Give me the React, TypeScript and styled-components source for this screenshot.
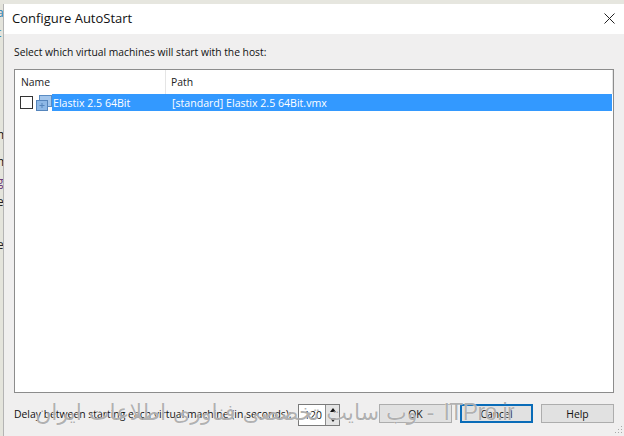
import React from "react";
import styled, { createGlobalStyle } from "styled-components";

const Global = createGlobalStyle`
  html, body { margin: 0; padding: 0; background: #e6e6df; }
  * { box-sizing: border-box; }
  #root { width: 624px; height: 436px; overflow: hidden; }
`;

const Page = styled.div`
  position: relative;
  width: 624px;
  height: 436px;
  display: flex;
  padding-top: 4px;
  overflow: hidden;
  font-family: "Open Sans", "Noto Sans", sans-serif;
  font-size: 10.4px;
  color: #111;
`;

const Behind = styled.div`
  width: 3px;
  flex: none;
  display: flex;
  flex-direction: column;
  overflow: hidden;
  background: #e4e4dc;
  font-size: 12px;
  line-height: 14px;
`;

const BehindLetter = styled.span<{ $top: number; $color?: string }>`
  display: block;
  height: 14px;
  margin-top: ${(p) => p.$top}px;
  margin-left: -3px;
  color: ${(p) => p.$color || "#222"};
`;

const Window = styled.div`
  flex: 1;
  display: flex;
  flex-direction: column;
  background: #f0efef;
  border-left: 1px solid #b4b4b4;
`;

const TitleBar = styled.div`
  height: 30px;
  flex: none;
  display: flex;
  align-items: center;
  justify-content: space-between;
  padding: 0 9px 2px 8px;
  background: #fff;
  font-size: 13px;
`;

const Body = styled.div`
  flex: 1;
  display: flex;
  flex-direction: column;
  padding: 11px 9px 11px 10px;
`;

const Prompt = styled.div`
  height: 14px;
  line-height: 14px;
  margin-bottom: 10px;
  font-size: 10.3px;
`;

const List = styled.div`
  height: 324px;
  flex: none;
  margin-right: 1px;
  background: #fff;
  border: 1px solid #8c8c8c;
`;

const HeaderRow = styled.div`
  display: flex;
  height: 24px;
`;

const HeaderCell = styled.div<{ $width: number; $pad: number }>`
  width: ${(p) => p.$width}px;
  flex: none;
  padding-left: ${(p) => p.$pad}px;
  line-height: 24px;
  color: #222;
  border-right: 1px solid #e5e5e5;
`;

const Row = styled.div`
  display: flex;
  align-items: center;
  height: 17px;
`;

const Check = styled.span`
  width: 13px;
  height: 13px;
  flex: none;
  margin-left: 5px;
  background: #fff;
  border: 1px solid #333;
`;

const VmIcon = styled.svg`
  flex: none;
  width: 16px;
  height: 16px;
  margin-left: 3px;
`;

const Selected = styled.div`
  flex: 1;
  height: 17px;
  margin-right: 1px;
  display: flex;
  align-items: center;
  background: #3399ff;
  color: #fff;
  font-size: 10.6px;
`;

const SelectedCell = styled.div<{ $width?: number }>`
  width: ${(p) => (p.$width ? `${p.$width}px` : "auto")};
  flex: none;
  padding-left: 1px;
`;

const Footer = styled.div`
  display: flex;
  align-items: flex-start;
  height: 22px;
  margin-top: 11px;
  padding-right: 1px;
`;

const DelayLabel = styled.span`
  width: 284px;
  flex: none;
  line-height: 20px;
  white-space: nowrap;
  font-size: 10.4px;
`;

const Spinner = styled.div`
  display: flex;
  width: 42px;
  height: 22px;
  flex: none;
  background: #fff;
  border: 1px solid #7a7a7a;
`;

const SpinValue = styled.span`
  flex: 1;
  line-height: 20px;
  padding-left: 5px;
  overflow: hidden;
`;

const SpinArrows = styled.div`
  width: 14px;
  display: flex;
  flex-direction: column;
  background: #e4e4e4;
  border-left: 1px solid #8c8c8c;
`;

const SpinArrow = styled.span<{ $down?: boolean }>`
  flex: 1;
  display: flex;
  align-items: center;
  justify-content: center;
  &::before {
    content: "";
    border-left: 3px solid transparent;
    border-right: 3px solid transparent;
    ${(p) => (p.$down ? "border-top: 4px solid #111;" : "border-bottom: 4px solid #111;")}
  }
`;

const Buttons = styled.div`
  display: flex;
  gap: 8px;
  margin-left: auto;
`;

const Button = styled.button<{ $focused?: boolean }>`
  width: 73px;
  height: 19px;
  padding: 0;
  font: inherit;
  color: #111;
  background: #e1e1e1;
  border: ${(p) => (p.$focused ? "2px solid #0a6cb8" : "1px solid #adadad")};
`;

const Grip = styled.svg`
  position: absolute;
  right: 1px;
  bottom: 1px;
  width: 10px;
  height: 10px;
`;

/* semi transparent site watermark lying over the footer */
const Watermark = styled.div`
  position: absolute;
  left: 0;
  top: 398px;
  width: 514px;
  display: flex;
  justify-content: flex-end;
  align-items: baseline;
  gap: 9px;
  white-space: nowrap;
  color: rgba(125, 125, 125, 0.6);
  font-family: "DejaVu Sans", "Noto Sans", sans-serif;
  font-size: 22px;
  line-height: 28px;
  text-shadow: 0 0 1px #fff;
  pointer-events: none;
`;

const WatermarkLatin = styled.span`
  font-family: "Liberation Sans", sans-serif;
  font-size: 23px;
  letter-spacing: -0.6px;
`;

export default function App() {
  return (
    <Page>
      <Global />
      <Behind>
        <BehindLetter $top={2} $color="#2a7fb0">a</BehindLetter>
        <BehindLetter $top={6} $color="#2a7fb0">t</BehindLetter>
        <BehindLetter $top={88}>m</BehindLetter>
        <BehindLetter $top={13}>m</BehindLetter>
        <BehindLetter $top={6} $color="#6a3a7a">g</BehindLetter>
        <BehindLetter $top={6}>e</BehindLetter>
        <BehindLetter $top={7} $color="#6bb8d8">.</BehindLetter>
        <BehindLetter $top={8}>e</BehindLetter>
        <BehindLetter $top={6} $color="#6bb8d8">.</BehindLetter>
      </Behind>
      <Window>
        <TitleBar>
          <span>Configure AutoStart</span>
          <svg width="11" height="11" viewBox="0 0 11 11">
            <path d="M0.5 0.5L10.5 10.5M10.5 0.5L0.5 10.5" stroke="#222" strokeWidth="1" fill="none" />
          </svg>
        </TitleBar>
        <Body>
          <Prompt>Select which virtual machines will start with the host:</Prompt>
          <List>
            <HeaderRow>
              <HeaderCell $width={151} $pad={6}>Name</HeaderCell>
              <HeaderCell $width={447} $pad={5}>Path</HeaderCell>
            </HeaderRow>
            <Row>
              <Check />
              <VmIcon viewBox="0 0 16 16">
                <rect x="3.5" y="0.5" width="12" height="11" fill="#a3c6ec" stroke="#5b8cc2" />
                <rect x="0.5" y="5.5" width="11" height="10" fill="#8db8e6" stroke="#5585bc" />
                <path d="M6 8v5M3.5 10.5h5" stroke="#5585bc" />
              </VmIcon>
              <Selected>
                <SelectedCell $width={119}>Elastix 2.5 64Bit</SelectedCell>
                <SelectedCell>[standard] Elastix 2.5 64Bit.vmx</SelectedCell>
              </Selected>
            </Row>
          </List>
          <Footer>
            <DelayLabel>Delay between starting each virtual machine (in seconds):</DelayLabel>
            <Spinner>
              <SpinValue>120</SpinValue>
              <SpinArrows>
                <SpinArrow />
                <SpinArrow $down />
              </SpinArrows>
            </Spinner>
            <Buttons>
              <Button>OK</Button>
              <Button $focused>Cancel</Button>
              <Button>Help</Button>
            </Buttons>
          </Footer>
        </Body>
      </Window>
      <Watermark>
        <span dir="rtl">وب سایت تخصصی فناوری اطلاعات ایران</span>
        <span>-</span>
        <WatermarkLatin>ITPro.ir</WatermarkLatin>
      </Watermark>
      <Grip viewBox="0 0 10 10">
        <path d="M8 1h1v1H8zM5 4h1v1H5zM8 4h1v1H8zM2 7h1v1H2zM5 7h1v1H5zM8 7h1v1H8z" fill="#a9a9a9" />
      </Grip>
    </Page>
  );
}
